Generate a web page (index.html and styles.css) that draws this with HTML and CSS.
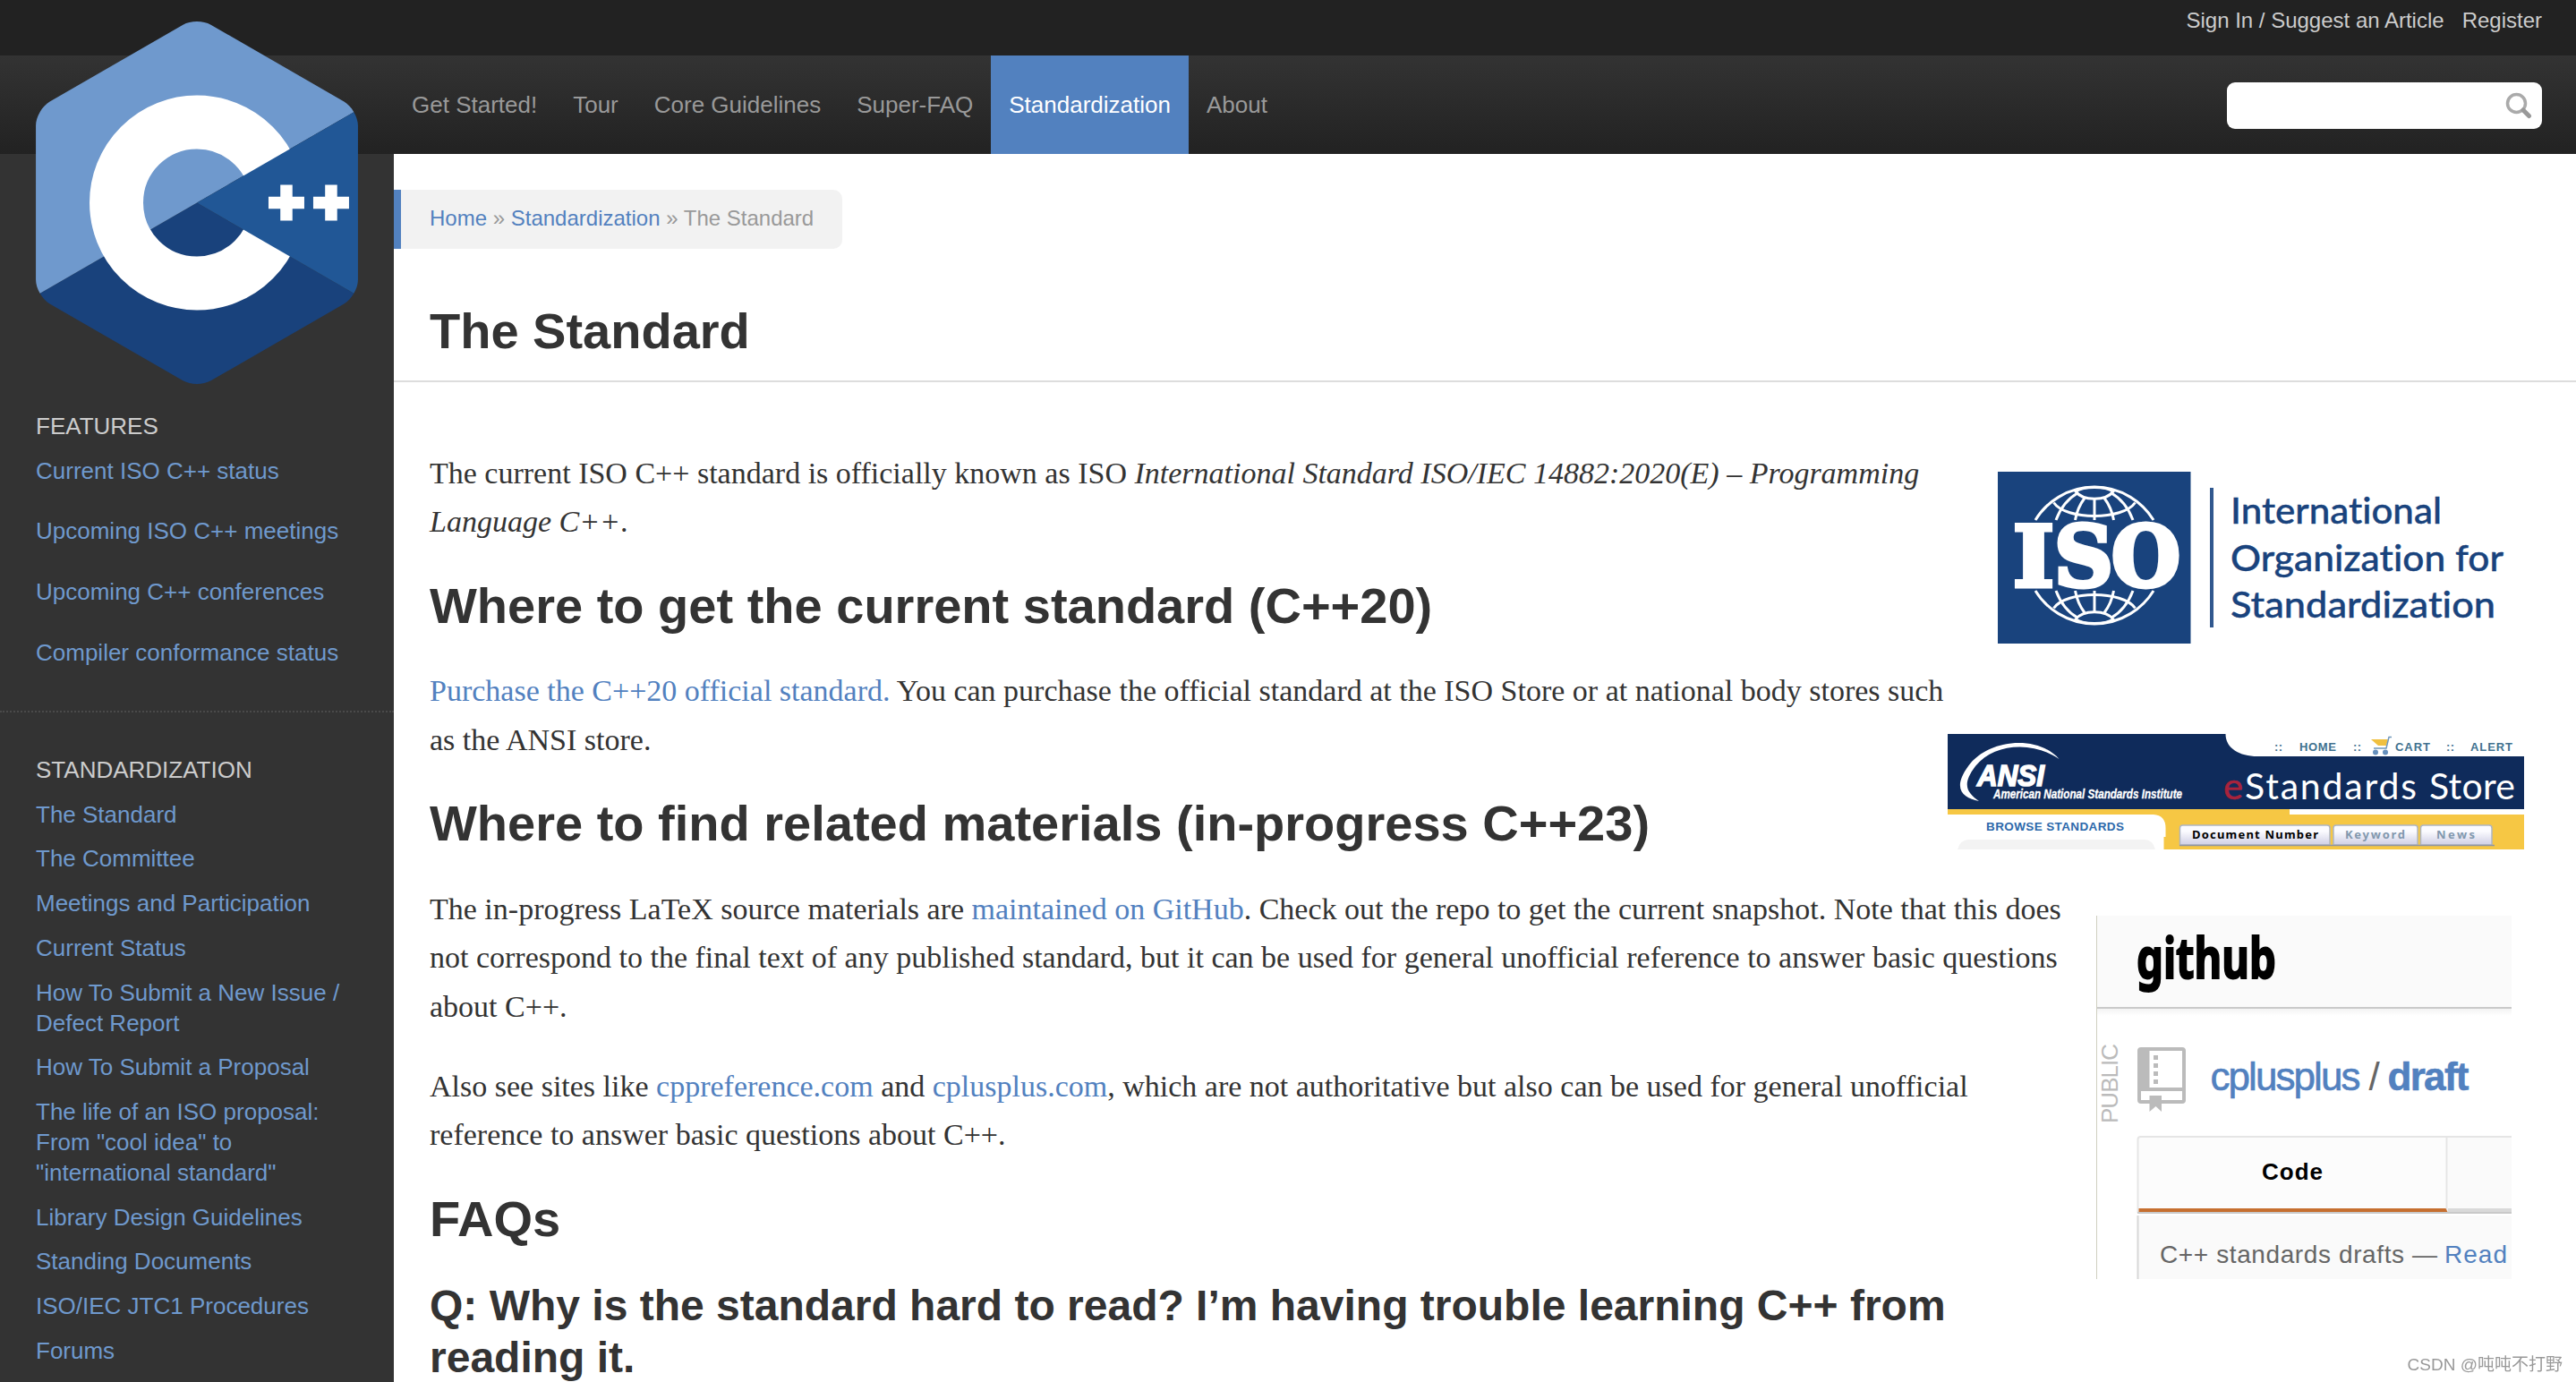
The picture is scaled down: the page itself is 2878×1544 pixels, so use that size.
FILE: index.html
```html
<!DOCTYPE html>
<html lang="en">
<head>
    <meta charset="UTF-8">
    <meta name="viewport" content="width=device-width, initial-scale=1.0">
    <title>The Standard : Standard C++</title>
    <link rel="stylesheet" href="styles.css">
</head>
<body>
    <header class="header">
        <div class="top-bar">
            <a href="#">Sign In / Suggest an Article</a>
            <a href="#">Register</a>
        </div>
        <div class="nav-bar">
            <nav class="nav">
                <a href="#">Get Started!</a>
                <a href="#">Tour</a>
                <a href="#">Core Guidelines</a>
                <a href="#">Super-FAQ</a>
                <a href="#" class="active">Standardization</a>
                <a href="#">About</a>
            </nav>
            <div class="search">
                <svg width="30" height="30" viewBox="0 0 30 30" fill="none">
                    <circle cx="12.5" cy="12.5" r="10" stroke="#aaa" stroke-width="3.5"/>
                    <path d="M20 20l6.500 6.500" stroke="#999" stroke-width="5" stroke-linecap="round"/>
                </svg>
            </div>
        </div>
        <a href="#" class="logo">
            <svg width="360" height="405" viewBox="0 0 306 344.35">
                <path fill="#19427c" d="M166.25,341.193l126.5-73.034c3.644-2.104,6.956-5.737,9.357-9.897L153,172.175L3.893,258.263c2.401,4.159,5.714,7.793,9.357,9.896l126.5,73.034C147.037,345.401,158.963,345.401,166.25,341.193z"/>
                <path fill="#6f99cd" d="M302.108,86.087c-2.402-4.16-5.715-7.793-9.358-9.897L166.25,3.156c-7.287-4.208-19.213-4.208-26.5,0L13.25,76.19C5.962,80.397,0,90.725,0,99.14v146.069c0,4.208,1.491,8.894,3.893,13.053L153,172.175L302.108,86.087z"/>
                <circle cx="153" cy="172.175" r="76.5" fill="none" stroke="#fff" stroke-width="51"/>
                <path fill="#215796" d="M302.107,258.262c2.401-4.159,3.893-8.845,3.893-13.053V99.14c0-4.208-1.49-8.893-3.892-13.052L153,172.175L302.107,258.262z"/>
                <path stroke="#fff" stroke-width="11.5" d="M221 172.175h34M238 155.175v34M263.5 172.175h34M280.5 155.175v34"/>
            </svg>
        </a>
    </header>

    <div class="page">
        <aside class="sidebar">
            <section class="features">
                <h4>FEATURES</h4>
                <p><a href="#">Current ISO C++ status</a></p>
                <p><a href="#">Upcoming ISO C++ meetings</a></p>
                <p><a href="#">Upcoming C++ conferences</a></p>
                <p><a href="#">Compiler conformance status</a></p>
            </section>
            <section class="side-nav">
                <h4>STANDARDIZATION</h4>
                <ul>
                    <li><a href="#">The Standard</a></li>
                    <li><a href="#">The Committee</a></li>
                    <li><a href="#">Meetings and Participation</a></li>
                    <li><a href="#">Current Status</a></li>
                    <li><a href="#">How To Submit a New Issue / Defect Report</a></li>
                    <li><a href="#">How To Submit a Proposal</a></li>
                    <li><a href="#">The life of an ISO proposal: From "cool idea" to "international standard"</a></li>
                    <li><a href="#">Library Design Guidelines</a></li>
                    <li><a href="#">Standing Documents</a></li>
                    <li><a href="#">ISO/IEC JTC1 Procedures</a></li>
                    <li><a href="#">Forums</a></li>
                </ul>
            </section>
        </aside>

        <main class="main">
            <div class="breadcrumb">
                <a href="#">Home</a> » <a href="#">Standardization</a> » The Standard
            </div>
            <h1>The Standard</h1>

            <article class="content">
                <!-- ISO logo -->
                <svg class="pic iso" width="640" height="240" viewBox="0 0 640 240">
                    <defs>
                        <g id="half-globe" fill="none" stroke="#fff" stroke-width="3">
                            <path d="M94 81A77.5 77.5 0 0 1 226 81"/>
                            <path d="M114.5 61.5C128 81.5 192 81.5 205.5 61.5"/>
                            <path d="M139 49C147 60 173 60 181 49C172 43 148 43 139 49Z"/>
                            <path d="M160 57V81M149 56.500Q141 67 138.500 81M171 56.500Q179 67 181.500 81M141 51Q125 60 117 81M179 51Q195 60 203 81"/>
                        </g>
                    </defs>
                    <rect x="52" y="27" width="215.500" height="192" fill="#19437d"/>
                    <use href="#half-globe"/>
                    <use href="#half-globe" transform="translate(0 241) scale(1 -1)"/>
                    <g class="iso-mark">
                        <text x="69" y="154.500" textLength="46" lengthAdjust="spacingAndGlyphs">I</text>
                        <text x="115" y="154.500" textLength="66" lengthAdjust="spacingAndGlyphs">S</text>
                        <text x="179" y="154.500" textLength="77" lengthAdjust="spacingAndGlyphs">O</text>
                    </g>
                    <rect x="289" y="45" width="4" height="156" fill="#31588f"/>
                    <g class="iso-name">
                        <text x="312" y="84.500" textLength="236" lengthAdjust="spacingAndGlyphs">International</text>
                        <text x="312" y="137.500" textLength="305" lengthAdjust="spacingAndGlyphs">Organization for</text>
                        <text x="312" y="190" textLength="296" lengthAdjust="spacingAndGlyphs">Standardization</text>
                    </g>
                </svg>

                <!-- ANSI eStandards store banner -->
                <svg class="pic ansi" width="644" height="129" viewBox="0 0 644 129">
                    <defs>
                        <linearGradient id="tab" x1="0" y1="0" x2="0" y2="1">
                            <stop offset="0.300" stop-color="#fbfbff"/>
                            <stop offset="1" stop-color="#cfcfe4"/>
                        </linearGradient>
                    </defs>
                    <rect width="644" height="84" fill="#0f2b5b"/>
                    <path fill="#fff" d="M310.500 0C310.500 16 326 25 346 25H644V0Z"/>
                    <rect y="84" width="644" height="45" fill="#f6c744"/>
                    <rect x="382" y="84" width="262" height="6" fill="#fff"/>
                    <path fill="#fff" d="M0 90H230Q243.500 91 243.500 105V115H241.500V129H0Z"/>
                    <path fill="#f3f3f3" d="M11 129Q14 118 24 118H220Q229 118 232 129Z"/>
                    <path fill="#fff" d="M124.500 28C100 0 44 6 23 36C4 62 18 72 35 75C22 66 15 57 31 36C52 10 96 8 124.500 28Z"/>
                    <text class="ansi-mark" x="33" y="57.500" textLength="75" lengthAdjust="spacingAndGlyphs">ANSI</text>
                    <text class="ansi-full" x="51" y="72" textLength="211" lengthAdjust="spacingAndGlyphs">American National Standards Institute</text>
                    <g class="store-name">
                        <text class="store-e" x="308" y="72.500" textLength="22" lengthAdjust="spacingAndGlyphs">e</text>
                        <text x="332" y="72.500" textLength="192">Standards</text>
                        <text x="538" y="72.500" textLength="96">Store</text>
                    </g>
                    <g class="store-links">
                        <text x="365" y="19" textLength="9">::</text>
                        <text x="393" y="19" textLength="41">HOME</text>
                        <text x="453" y="19" textLength="9">::</text>
                        <text x="500" y="19" textLength="39">CART</text>
                        <text x="557" y="19" textLength="9">::</text>
                        <text x="584" y="19" textLength="47">ALERT</text>
                    </g>
                    <path fill="#f0c040" d="M473 6H492L490 13H481Z"/>
                    <path fill="none" stroke="#6f97bb" stroke-width="1.500" d="M496 3.500H493L490 16H476"/>
                    <circle cx="478" cy="20.500" r="3" fill="#6690bd"/>
                    <circle cx="489" cy="20.500" r="3" fill="#6690bd"/>
                    <text class="browse" x="43" y="108" textLength="154">BROWSE STANDARDS</text>
                    <g fill="url(#tab)" stroke="#aeb6c4" stroke-width="1.500">
                        <path d="M259.500 124V105Q259.500 102 262.500 102H424Q427 102 427 105V124Z"/>
                        <path d="M431 124V105Q431 102 434 102H522Q525 102 525 105V124Z"/>
                        <path d="M528.500 124V105Q528.500 102 531.500 102H605Q608 102 608 105V124Z"/>
                    </g>
                    <path stroke="#9095a4" stroke-width="1.500" d="M259 124.500H611"/>
                    <g class="store-tabs">
                        <text class="current" x="273" y="117" textLength="141">Document Number</text>
                        <text x="444" y="117" textLength="67">Keyword</text>
                        <text x="546" y="117" textLength="43">News</text>
                    </g>
                </svg>

                <!-- GitHub repository header -->
                <svg class="pic github" width="464" height="406" viewBox="0 0 464 406">
                    <defs>
                        <linearGradient id="shade" x1="0" y1="0" x2="0" y2="1">
                            <stop offset="0" stop-color="#f3f3f3"/>
                            <stop offset="1" stop-color="#fff"/>
                        </linearGradient>
                    </defs>
                    <rect width="464" height="102" fill="#fafafa"/>
                    <rect y="104" width="464" height="8" fill="url(#shade)"/>
                    <rect y="102" width="464" height="2" fill="#c9c9c9"/>
                    <rect width="1" height="406" fill="#cfcfc0"/>
                    <text class="gh-mark" x="45" y="70" textLength="156" lengthAdjust="spacingAndGlyphs">github</text>
                    <text class="gh-public" transform="translate(24 232) rotate(-90)" textLength="89">PUBLIC</text>
                    <g fill="#bbb">
                        <path fill-rule="evenodd" d="M50 147H96Q100 147 100 151V206Q100 210 96 210H50Q46 210 46 206V151Q46 147 50 147ZM59.500 151V192H96V151ZM50 196V206H96V196Z"/>
                        <path d="M59.500 201H73V219L66.500 213L59.500 219Z"/>
                        <path d="M64 156h5v5h-5zM64 165h5v5h-5zM64 174h5v5h-5zM64 183h5v5h-5z"/>
                    </g>
                    <g class="gh-repo">
                        <text x="127.500" y="195" textLength="168">cplusplus</text>
                        <text class="slash" x="304.500" y="195">/</text>
                        <text class="name" x="325.500" y="195" textLength="91">draft</text>
                    </g>
                    <path fill="#fcfcfc" stroke="#e5e5e5" stroke-width="2" d="M46.500 332V250Q46.500 247 49.500 247H391.500V332"/>
                    <rect x="393" y="248" width="71" height="79" fill="#fafafa"/>
                    <rect x="391" y="246" width="73" height="2" fill="#e5e5e5"/>
                    <rect x="393" y="327" width="71" height="4" fill="#d9d9d9"/>
                    <path fill="#c66f30" d="M47.500 327H390.500L392.500 331H47.500Z"/>
                    <rect x="46" y="331" width="418" height="2" fill="#c9c9c9"/>
                    <rect x="46" y="335" width="418" height="71" fill="#fafafa"/>
                    <rect x="45.500" y="335" width="2" height="71" fill="#d8d8d8"/>
                    <text class="gh-tab" x="185" y="295" textLength="68">Code</text>
                    <g class="gh-desc">
                        <text x="71" y="387.500" textLength="310">C++ standards drafts —</text>
                        <text class="link" x="389" y="387.500" textLength="70">Read</text>
                    </g>
                </svg>

                <p class="intro">The current ISO C++ standard is officially known as ISO <em>International Standard ISO/IEC 14882:2020(E) – Programming Language C++</em>.</p>
                <h2>Where to get the current standard (C++20)</h2>
                <p><a href="#">Purchase the C++20 official standard.</a> You can purchase the official standard at the ISO Store or at national body stores such as the ANSI store.</p>
                <h2>Where to find related materials (in-progress C++23)</h2>
                <p>The in-progress LaTeX source materials are <a href="#">maintained on GitHub</a>. Check out the repo to get the current snapshot. Note that this does not correspond to the final text of any published standard, but it can be used for general unofficial reference to answer basic questions about C++.</p>
                <p>Also see sites like <a href="#">cppreference.com</a> and <a href="#">cplusplus.com</a>, which are not authoritative but also can be used for general unofficial reference to answer basic questions about C++.</p>
                <h2>FAQs</h2>
                <h3>Q: Why is the standard hard to read? I’m having trouble learning C++ from reading it.</h3>
            </article>
        </main>
    </div>

    <div class="watermark">CSDN @吨吨不打野</div>
</body>
</html>
```

FILE: styles.css
```css
* {
    box-sizing: border-box;
}
body {
    margin: 0;
    height: 1544px;
    overflow: hidden;
    display: flex;
    flex-direction: column;
    font-family: "Liberation Sans", Arial, sans-serif;
    font-size: 26px;
    color: #333;
    background: #fff;
}
a {
    color: #5281bf;
    text-decoration: none;
}
svg {
    display: block;
}

/* Header */
.header {
    position: relative;
    flex: none;
}
.top-bar {
    display: flex;
    justify-content: flex-end;
    gap: 20px;
    height: 62px;
    padding: 8px 38px 0 0;
    background: #222;
    font-size: 24px;
    line-height: 30px;
}
.top-bar a {
    color: #ccc;
}
.nav-bar {
    display: flex;
    justify-content: space-between;
    align-items: center;
    height: 110px;
    padding: 0 38px 0 440px;
    background: linear-gradient(#333, #222);
}
.nav {
    display: flex;
}
.nav a {
    padding: 0 20px;
    line-height: 110px;
    color: #999;
}
.nav a.active {
    background: #5281bf;
    color: #fff;
}
.search {
    display: flex;
    align-items: center;
    justify-content: flex-end;
    width: 352px;
    height: 52px;
    margin-top: 2px;
    padding-right: 11px;
    background: #fff;
    border-radius: 9px;
}
.logo {
    position: absolute;
    top: 24px;
    left: 40px;
}

/* Page */
.page {
    display: grid;
    grid-template-columns: 440px 1fr;
    flex: 1;
    min-height: 0;
}
.sidebar {
    background: #333;
    line-height: 33.8px;
}
.sidebar a {
    color: #6f99cd;
}
.sidebar h4 {
    margin: 0 0 16px;
    font-size: 26px;
    font-weight: normal;
    color: #ccc;
}
.features {
    padding: 288px 40px 48px;
    border-bottom: 2px dotted #4a4a4a;
    border-top-right-radius: 10px;
}
.features p {
    margin: 0 0 33.8px;
}
.features p:last-child {
    margin: 0;
}
.side-nav {
    padding: 47.5px 40px 0;
}
.side-nav ul {
    margin: 0;
    padding: 0;
    list-style: none;
}
.side-nav li {
    margin-bottom: 16px;
}

/* Main column */
.main {
    padding-top: 40px;
}
.breadcrumb {
    width: fit-content;
    height: 66px;
    padding: 0 32px;
    border-left: 8px solid #5281bf;
    border-radius: 0 10px 10px 0;
    background: #f2f2f2;
    color: #999;
    font-size: 24px;
    line-height: 64px;
}
h1, h2, h3 {
    margin: 0;
    font-size: 56px;
    line-height: 67.2px;
}
h1 {
    padding: 58px 40px 22px;
    border-bottom: 2px solid #ddd;
}
h3 {
    margin-top: 35px;
    font-size: 48px;
    line-height: 57.6px;
}
.content {
    padding: 73px 58px 0 40px;
}
.content p {
    margin: 0 0 34px;
    font-family: "Liberation Serif", "Times New Roman", serif;
    font-size: 34px;
    line-height: 54.6px;
}
.content .intro {
    margin-top: 1.4px;
}
.content p + h2 {
    margin-top: -2px;
}
.content h2 + p {
    margin-top: 35.2px;
}

/* Floated pictures */
.pic {
    float: right;
    clear: right;
}
.iso {
    margin-bottom: 80px;
}
.github {
    margin: 74px 14px 30px 20px;
}
.iso-mark {
    font: bold 93px "DejaVu Serif", serif;
    fill: #fff;
    stroke: #fff;
    stroke-width: 5px;
}
.iso-name {
    font: 500 40px Lato, sans-serif;
    font-variant-ligatures: none;
    fill: #19437d;
    stroke: #19437d;
    stroke-width: 0.4px;
}
.ansi-mark {
    font: italic bold 34px "Liberation Sans", sans-serif;
    fill: #fff;
    stroke: #fff;
    stroke-width: 1.6px;
}
.ansi-full {
    font: italic bold 14.5px "Liberation Sans", sans-serif;
    fill: #fff;
    stroke: #fff;
    stroke-width: 0.3px;
}
.store-name {
    font: 400 41px Lato, sans-serif;
    fill: #fff;
}
.store-e {
    fill: #a8233c;
    stroke: #a8233c;
    stroke-width: 0.6px;
}
.store-links {
    font: bold 13px "Liberation Sans", sans-serif;
    fill: #41728f;
}
.browse {
    font: bold 13.5px "Liberation Sans", sans-serif;
    fill: #2d69ab;
}
.store-tabs {
    font: bold 13px "Noto Sans", sans-serif;
    fill: #8298ae;
}
.store-tabs .current {
    fill: #000;
}
.gh-mark {
    font: bold 63px "Noto Sans", sans-serif;
    fill: #000;
    stroke: #000;
    stroke-width: 2px;
}
.gh-public {
    font: 26px "Liberation Sans", sans-serif;
    fill: #bbb;
}
.gh-repo {
    font: 44px "Liberation Sans", sans-serif;
    fill: #5281bf;
    stroke: #5281bf;
    stroke-width: 0.6px;
}
.gh-repo .slash {
    fill: #666;
    stroke: none;
}
.gh-repo .name {
    font-weight: bold;
}
.gh-tab {
    font: bold 26px "Liberation Sans", sans-serif;
    fill: #000;
}
.gh-desc {
    font: 28px "Liberation Sans", sans-serif;
    fill: #666;
}
.gh-desc .link {
    fill: #5281bf;
}

.watermark {
    position: fixed;
    right: 15px;
    bottom: 5px;
    font: 19px/28px "Liberation Sans", "Noto Sans CJK SC", sans-serif;
    color: #999;
}
```
